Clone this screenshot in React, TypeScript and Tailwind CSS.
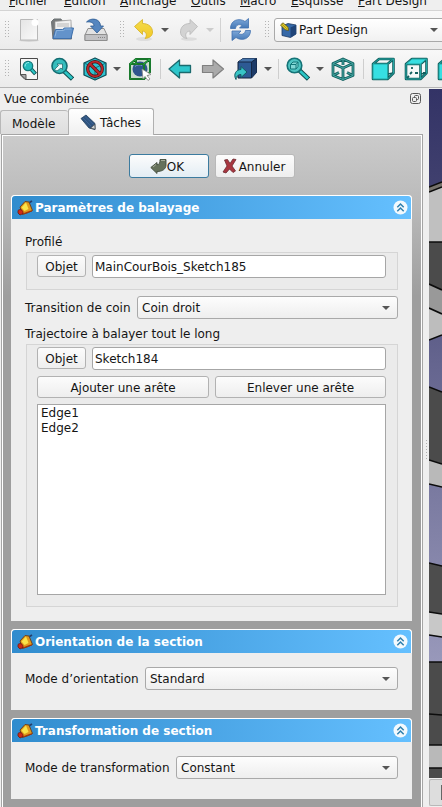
import React from 'react';

const teal = '#2cc5c5';
const ink = '#0d4a4c';
const edge = '#12605f';

function Handle() {
  return (
    <svg width="5" height="18" viewBox="0 0 5 18" className="shrink-0" fill="#b4b4b4">
      {[0, 3, 6, 9, 12, 15].map((y) => (
        <g key={y}>
          <rect x="0" y={y} width="1" height="1" />
          <rect x="3" y={y} width="1" height="1" />
        </g>
      ))}
    </svg>
  );
}

function Caret({ color = '#555555', className = '' }: { color?: string; className?: string }) {
  return (
    <svg width="8" height="4" viewBox="0 0 8 4" className={`shrink-0 ${className}`}>
      <path d="M0 0h8L4 4z" fill={color} />
    </svg>
  );
}

function Icon({ children, className = '' }: { children: React.ReactNode; className?: string }) {
  return (
    <svg width="24" height="24" viewBox="0 0 24 24" className={`shrink-0 ${className}`} strokeLinejoin="round">
      {children}
    </svg>
  );
}

function Gradients() {
  return (
    <svg width="0" height="0" className="absolute">
      <defs>
        <linearGradient id="paper" x1="0" y1="0" x2="1" y2="1">
          <stop offset="0" stopColor="#e4e4e4" />
          <stop offset="1" stopColor="#fafafa" />
        </linearGradient>
        <linearGradient id="blue" x1="0" y1="0" x2="0" y2="1">
          <stop offset="0" stopColor="#7fa9da" />
          <stop offset="1" stopColor="#4377b5" />
        </linearGradient>
        <linearGradient id="gold" x1="0" y1="0" x2="0" y2="1">
          <stop offset="0" stopColor="#f3dc4c" />
          <stop offset="1" stopColor="#f3c824" />
        </linearGradient>
        <linearGradient id="view" x1="0" y1="89" x2="0" y2="778" gradientUnits="userSpaceOnUse">
          <stop offset="0" stopColor="#333366" />
          <stop offset="0.15" stopColor="#41416f" />
          <stop offset="0.4" stopColor="#65658f" />
          <stop offset="0.65" stopColor="#8282a7" />
          <stop offset="0.83" stopColor="#9898ba" />
        </linearGradient>
      </defs>
    </svg>
  );
}

function CubeFace({ top }: { top?: boolean }) {
  const outline = 'M2 7l6-5h14.500v14l-6 6H2zM2 7h14.500v15M16.500 7l6-5';
  return (
    <Icon>
      <path d={outline} fill="#f4f8f8" stroke={edge} strokeWidth="2.600" />
      <path d="M16.500 17l6-1" stroke={edge} strokeWidth="1.500" />
      <path d={top ? 'M2 7l6-5h14.500l-6 5z' : 'M2 7h14.500v15H2z'} fill="#36dfe2" />
      <path d={outline} fill="none" stroke="#22a5a3" strokeWidth="1" />
      {top && <path d="M8 10v2M8 15l-2 2M5 19l-2 2M11 16h3M19 16h3" fill="none" stroke={edge} strokeWidth="1.800" />}
    </Icon>
  );
}

function FileToolbar() {
  return (
    <div className="flex h-[39px] shrink-0 items-center border-b border-[#b5b5b5] bg-linear-to-b from-[#f8f8f8] to-[#ebebeb] pl-[5px]">
      <Handle />
      <Icon className="ml-[8px]">
        <ellipse cx="11" cy="22.500" rx="10" ry="1.200" fill="#cfcfcf" />
        <path d="M2.500 1.500h17v20.500h-17z" fill="url(#paper)" stroke="#b8b8b8" />
        <circle cx="17" cy="4.500" r="3.500" fill="#fff" />
      </Icon>
      <Icon className="ml-[8px]">
        <path d="M1.500 3.500L4 1h7l1 2h8.500l1 18H3z" fill="#777a7c" stroke="#6d7275" />
        <path d="M5 3.500L21 2v11H5z" fill="#f0f0f0" stroke="#999" strokeWidth=".7" />
        <path d="M7 6h12M7 8h12" stroke="#b8b8b8" />
        <path d="M3 20.500l2.500-9h7l2-1.500h9l-2.500 10.500z" fill="#6393cb" stroke="#3f70ac" />
        <path d="M5 18.500l1.500-6h7l2-1.500h6" fill="none" stroke="#8db4de" />
      </Icon>
      <Icon className="ml-[10px]">
        <path d="M4 10.500h16l3 6.500v5.500H1V17z" fill="#e2e2e2" stroke="#8f8f8f" />
        <path d="M1 16.500h22v6H1z" fill="#c2c2c4" stroke="#8f8f8f" />
        <path d="M14 19.500h7" stroke="#858585" strokeDasharray="1 1" />
        <path d="M2.500 4C7-1 16.500.5 16.500 8h3l-6.500 7L6.500 8h3.500C10 4.500 6.500 3.500 2.500 4z" fill="#5586bf" stroke="#2d5c93" strokeWidth=".8" />
      </Icon>
      <div className="ml-[12px]"><Handle /></div>
      <Icon className="ml-[8px]">
        <ellipse cx="11" cy="21" rx="8" ry="2" fill="#ddd" />
        <path d="M1.500 8.500L9.500 1.500v4C16 5.500 19.500 9.500 19.500 14c0 4-3 6-7.500 6.500 2.500-3 1.500-7-2.500-7.500v3.500z" fill="url(#gold)" stroke="#d8b62f" strokeWidth=".9" />
      </Icon>
      <Caret className="ml-[4px]" />
      <Icon className="ml-[10px]">
        <ellipse cx="10" cy="21" rx="8" ry="1.800" fill="#dcdcdc" />
        <path d="M18.500 8.500L11 1.500v4C4.500 5.500 1.500 9.500 1.500 14c0 4 3 6 6.500 6.500-2.500-3-1.500-7 3-7.500v3.500z" fill="#d3d3d3" stroke="#bbbbbb" strokeWidth=".9" />
      </Icon>
      <Caret color="#cccccc" className="ml-[3px]" />
      <div className="ml-[6px] h-[24px] w-px shrink-0 bg-[#d2d2d2]" />
      <Icon className="ml-[8px]">
        <path d="M1.500 10.500C1.500 2 10-.5 16 3.500l3.500-3v9.500h-9l2.500-2.500C10 5.500 7 7 6.500 10.500z" fill="url(#blue)" stroke="#3f70ae" strokeWidth=".8" />
        <path d="M21.500 12.500c0 8.500-8.500 11-14.500 7l-4 3V13h9l-2.500 2.500c3 2 6.500.5 7-3z" fill="url(#blue)" stroke="#3f70ae" strokeWidth=".8" />
      </Icon>
      <div className="ml-[12px]"><Handle /></div>
      <div className="ml-[4px] flex h-[24px] w-[176px] shrink-0 items-center rounded-[3px] border border-[#a9a9a9] bg-linear-to-b from-white to-[#f1f1f1] pl-[5px]">
        <svg width="17" height="16" viewBox="0 0 17 16" className="shrink-0">
          <path d="M2 4l6-2.500L16 3v9l-5.500 3.500L2 13.500z" fill="#3669a8" stroke="#1c3a63" strokeWidth=".8" />
          <path d="M10.500 5.500L16 3v9l-5.500 3.500z" fill="#1f4478" />
          <path d="M.5 3L3 .8l5 4.500.5 3.200-3.200-.7z" fill="#e6cf26" stroke="#5a5014" strokeWidth=".8" />
          <path d="M1.800 2l5 4.800" stroke="#817515" strokeWidth=".7" />
        </svg>
        <span className="ml-[2px] w-[69px] pt-px whitespace-nowrap">Part Design</span>
        <Caret className="ml-[62px]" />
      </div>
    </div>
  );
}

function ViewToolbar() {
  const box = 'M2 7l6-5h14v13l-6 7H2zM2 7h14v15M16 7l6-5M8 2v5';
  const iso = 'M12 2l10 4.500v12L12 22.500l-10-4v-12zM2 6.500l10 4.500 10-4.500M12 11v11.500M2 18.500l6-3M22 18.500l-6-3M12 2v6';
  return (
    <div className="flex h-[38px] shrink-0 items-center border-b border-[#b5b5b5] bg-linear-to-b from-[#f8f8f8] to-[#ebebeb] pl-[5px]">
      <Handle />
      <Icon className="ml-[8px]">
        <path d="M2.500 1.500h17v21H7l-4.500-4.500z" fill="#f6f6f6" stroke="#4a4a4a" />
        <path d="M2.500 17.500H8v5z" fill="#aaa" stroke="#555" />
        <path d="M13 12l4.500 5" stroke={ink} strokeWidth="4" />
        <path d="M13 12l4 4.500" stroke={teal} strokeWidth="2.200" />
        <circle cx="10" cy="9" r="4.700" fill="#25bcbd" stroke="#147679" strokeWidth="1.300" />
        <path d="M7 9.500c0-3 2-4 4-4" stroke="#a0eeee" fill="none" />
      </Icon>
      <Icon className="ml-[8px]">
        <path d="M13.500 13.500l9 8.500" stroke={ink} strokeWidth="4.600" />
        <path d="M14 14l8 7.500" stroke={teal} strokeWidth="2.800" />
        <circle cx="9.500" cy="9" r="7.500" fill="#35bdbd" stroke="#126b70" strokeWidth="1.600" />
        <path d="M4.500 12.500l4-4L7 7h5.500v5.500L11 11l-4 3z" fill="#effafa" stroke="#185d61" strokeWidth=".7" />
      </Icon>
      <Icon className="ml-[9px]">
        <path d="M12 1l11 5v12l-11 5-11-5V6z" fill="#2fc3d0" stroke="#104d56" strokeWidth="1.300" />
        <path d="M1 6l11 5 11-5M12 11v12" fill="none" stroke="#176d77" />
        <circle cx="12" cy="12" r="7.300" fill="none" stroke="#4a1315" strokeWidth="3.200" />
        <path d="M7 7l10 10" stroke="#4a1315" strokeWidth="3.400" />
        <circle cx="12" cy="12" r="7.300" fill="none" stroke="#bd2a2d" strokeWidth="1.800" />
        <path d="M6.500 6.500l11 11" stroke="#bd2a2d" strokeWidth="2" />
      </Icon>
      <Caret className="ml-[6px]" />
      <Icon className="ml-[7px]">
        <path d="M2 7l6-5h14v13l-6 7H2z" fill="#c9dccf" />
        <circle cx="12" cy="12" r="7.500" fill="#2f558e" />
        <path d="M7 9.500c2-2 5-2 7-1" stroke="#7d9dc9" fill="none" />
        <path d={box} fill="none" stroke="#0a4514" strokeWidth="2" />
        <path d={box} fill="none" stroke="#26a742" strokeWidth="1.100" />
        <path d="M14 12l1 10 2-2.500 3 4 2-1.500-3-3.500 4-1z" fill="#fff" stroke="#888" strokeWidth=".8" />
      </Icon>
      <div className="ml-[8px] h-[20px] w-px shrink-0 bg-[#cecece]" />
      <Icon className="ml-[7px]">
        <path d="M1 12l10.500-9v5.500h11v7h-11V21z" fill="#2ec6cb" stroke="#1a6a6e" strokeWidth="1.300" />
      </Icon>
      <Icon className="ml-[9px]">
        <path d="M22.500 12L12 3v5.500H1.500v7H12V21z" fill="#aaa" stroke="#808080" strokeWidth="1.200" />
      </Icon>
      <Icon className="ml-[9px]">
        <path d="M4 5l5-3.500h13.500v14l-5 5.500H4z" fill="#2d5a94" stroke="#12213b" />
        <path d="M4 5l5-3.500h13.500l-5 3.500z" fill="#4675ab" />
        <path d="M17.500 5l5-3.500v14l-5 5.500z" fill="#1d3b68" />
        <path d="M4 5h13.500v16M17.500 5l5-3.500" fill="none" stroke="#142744" />
        <path d="M2 22.500c-3-5 0-10 5-10V9.500l6 5.500-6 5.500v-3c-3 0-5 2-5 5z" fill="#38c4c6" stroke="#125b62" />
      </Icon>
      <Caret className="ml-[6px]" />
      <div className="ml-[6px] h-[20px] w-px shrink-0 bg-[#cecece]" />
      <Icon className="ml-[7px]">
        <path d="M13 13l9.500 9" stroke={ink} strokeWidth="4.600" />
        <path d="M14 14l8 7.500" stroke={teal} strokeWidth="2.800" />
        <circle cx="8.500" cy="8.500" r="7.300" fill="#4fc4c2" stroke="#157377" strokeWidth="1.600" />
        <path d="M4.500 7.500l2.500-2.500h5v4.500l-2 2.500H4.500zM4.500 7.500h5.500V12M10 7.500L12 5" fill="#82d7d5" stroke="#137779" />
      </Icon>
      <Caret className="ml-[6px]" />
      <Icon className="ml-[7px]">
        <path d={iso} fill="none" stroke={edge} strokeWidth="2.800" />
        <path d={iso} fill="none" stroke="#48aaa6" strokeWidth="1" />
      </Icon>
      <div className="ml-[8px] h-[20px] w-px shrink-0 bg-[#cecece]" />
      <span className="ml-[7px] flex shrink-0"><CubeFace /></span>
      <span className="ml-[9px] flex shrink-0"><CubeFace top /></span>
      <span className="ml-[9px] flex w-[6px] shrink-0 overflow-hidden"><CubeFace /></span>
    </div>
  );
}

function SweepIcon() {
  return (
    <svg width="17" height="16" viewBox="0 0 17 16" className="shrink-0">
      <path d="M3 7l5-5.500 4 .5 3.500 8.500-4 2-6 2z" fill="#e09a1c" stroke="#6b3a12" strokeWidth=".9" />
      <path d="M4.500 7.500L9 2.500l2.500 6.500-4 2z" fill="#f9e34a" />
      <path d="M1 10.500c2-2 5.500-.5 5 3l-3 1.500-2-2z" fill="#cf2b17" stroke="#6d1610" strokeWidth=".8" />
      <path d="M6 13.500c3 0 6-2.500 9-2.500" fill="none" stroke="#a5300f" strokeWidth="1.200" />
      <path d="M12.500 2.500L15 1" stroke="#273e6a" strokeWidth="1.800" />
    </svg>
  );
}

function Section({ title, height, children }: { title: string; height: string; children: React.ReactNode }) {
  return (
    <section className={`flex flex-col rounded-t-[4px] bg-[#eeeeee] ${height}`}>
      <header className="flex h-[24px] shrink-0 items-center rounded-t-[4px] border border-b-0 border-white bg-linear-to-r from-[#308cce] to-[#65c0ff] pr-[2px] pl-[5px] font-bold text-white">
        <SweepIcon />
        <span className="ml-px grow pt-px whitespace-nowrap">{title}</span>
        <svg width="15" height="15" viewBox="0 0 15 15" className="mr-px">
          <circle cx="7.500" cy="7.500" r="7" fill="#f3f9fd" />
          <path d="M4.300 7.200l3.200-3.200 3.200 3.200M4.300 11.200L7.500 8l3.200 3.200" fill="none" stroke="#2f7fad" strokeWidth="1.500" />
        </svg>
      </header>
      {children}
    </section>
  );
}

function Btn({ children, className = '' }: { children: React.ReactNode; className?: string }) {
  return (
    <button className={`flex shrink-0 items-center justify-center rounded-[3px] border bg-linear-to-b from-[#fcfcfc] whitespace-nowrap ${className}`}>
      {children}
    </button>
  );
}

function Select({ value }: { value: string }) {
  return (
    <div className="flex h-[23px] grow items-center justify-between rounded-[3px] border border-[#a9a9a9] bg-linear-to-b from-[#fdfdfd] to-[#eeeeee] pr-[7px] pl-[4px]">
      <span className="pt-[2px]">{value}</span>
      <Caret />
    </div>
  );
}

function ObjectRow({ value }: { value: string }) {
  return (
    <div className="flex items-start gap-[6px]">
      <Btn className="h-[22px] w-[49px] border-[#b2b2b2] to-[#eeeeee] pt-[2px]">Objet</Btn>
      <div className="flex h-[23px] grow items-center rounded-[3px] border border-[#a6a6a6] bg-white pt-[2px] pl-[2px]">{value}</div>
    </div>
  );
}

function ModelView() {
  const bands: [string, string][] = [
    ['0,187 13,182 13,188 0,192', '#77736c'],
    ['0,192 13,187 13,242 0,242', '#c0c0c0'],
    ['0,242 13,242 13,290 0,284', '#4b4b4b'],
    ['0,284 13,290 13,314 0,308', '#999999'],
    ['0,308 13,314 13,335 0,340', '#bdbdbd'],
    ['0,387 13,392 13,464 0,460', '#4b4b4b'],
    ['0,460 13,464 13,487 0,484', '#b9b9b9'],
    ['0,563 13,566 13,614 0,612', '#4d4d4d'],
    ['0,612 13,614 13,637 0,635', '#c8c8c8'],
    ['0,662 13,662 13,745 0,745', '#4b4b4b'],
    ['0,745 13,745 13,768 0,768', '#b9b9b9'],
    ['0,768 13,768 13,778 0,778', '#4b4b4b'],
  ];
  return (
    <svg width="13" height="689" viewBox="0 89 13 689" className="shrink-0">
      <path d="M0 89h13v689H0z" fill="url(#view)" />
      {bands.map(([points, fill]) => (
        <polygon key={points} points={points} fill={fill} />
      ))}
      <path
        d="M0 187l13-5M0 192l13-5M0 242h13M0 284l13 6M0 308l13 6M0 340l13-5M0 387l13 5M0 460l13 4M0 484l13 3M0 563l13 3M0 612l13 2M0 635l13 2M0 662h13M0 714l13 1M0 745h13M0 768h13"
        stroke="#0c0c0c"
        strokeWidth="1.600"
        fill="none"
      />
    </svg>
  );
}

export default function App() {
  return (
    <div className="flex h-[807px] w-[442px] flex-col overflow-hidden bg-[#efefef] font-['DejaVu_Sans',sans-serif] text-[12px] leading-[15px] text-[#151515]">
      <Gradients />
      <nav className="flex h-[11px] shrink-0 items-end overflow-hidden border-b border-[#d4d4d4] pb-px pl-[9px] whitespace-nowrap">
        <span className="w-[55px] shrink-0"><u>F</u>ichier</span>
        <span className="w-[56px] shrink-0"><u>É</u>dition</span>
        <span className="w-[71px] shrink-0"><u>A</u>ffichage</span>
        <span className="w-[49px] shrink-0"><u>O</u>utils</span>
        <span className="w-[51px] shrink-0"><u>M</u>acro</span>
        <span className="w-[67px] shrink-0"><u>E</u>squisse</span>
        <span className="shrink-0"><u>P</u>art Design</span>
      </nav>
      <FileToolbar />
      <ViewToolbar />
      <div className="flex h-[719px] shrink-0">
        <aside className="flex w-[423px] flex-col">
          <div className="flex h-[20px] shrink-0 items-end justify-between pr-[2px] pl-[4px]">
            <span className="pb-px">Vue combinée</span>
            <svg width="11" height="11" viewBox="0 0 11 11" className="mb-[4px]" fill="none" stroke="#575757">
              <rect x=".5" y=".5" width="10" height="10" rx="2" />
              <rect x="4.500" y="2.500" width="4" height="4" rx="1" />
              <rect x="2.500" y="4.500" width="4" height="4" rx="1" fill="#efefef" />
            </svg>
          </div>
          <div className="flex h-[26px] shrink-0 items-end">
            <div className="flex h-[24px] w-[68px] items-center rounded-t-[3px] border border-r-0 border-b-0 border-[#b8b8b8] bg-linear-to-b from-[#e9e9e9] to-[#dedede] pt-[4px] pl-[11px]">Modèle</div>
            <div className="z-10 -mb-px flex h-[27px] w-[86px] items-center rounded-t-[3px] border border-b-0 border-[#b0b0b0] bg-linear-to-b from-white to-[#f0f0f0] pl-[11px]">
              <svg width="16" height="17" viewBox="0 0 16 17">
                <path d="M1 4.500L6 1l9 8.500v6l-6-1.500z" fill="#2f5480" stroke="#22405f" strokeWidth=".8" />
                <path d="M10.500 14.200l4.200-4 .5 5z" fill="#ced2d4" stroke="#3c4245" strokeWidth=".7" />
                <path d="M3 4l8 8M5 2.500l8.500 8" stroke="#44699a" strokeWidth=".8" />
              </svg>
              <span className="ml-[4px] pt-[2px]">Tâches</span>
            </div>
          </div>
          <div className="ml-px flex grow flex-col border-x border-t border-[#a5a5a5]">
            <div className="flex grow flex-col border-x border-t border-white bg-[linear-gradient(to_bottom,#cbcbcb_0px,#b8b8b8_75px,#9e9e9e_160px,#9e9e9e_100%)] pr-[9px] pl-[8px]">
              <div className="mt-[18px] flex h-[24px] shrink-0 gap-[6px] pl-[118px]">
                <Btn className="w-[80px] border-[#3c7b9f] to-[#e3edf4] pr-[4px]">
                  <svg width="17" height="16" viewBox="0 0 17 16">
                    <path d="M.8 9.500L7 4.500v2.200c2.500 0 3-2 3-5.200h6V7c0 4-3.500 6.500-9 6.500v2z" fill="#65715b" stroke="#434d3d" strokeWidth=".9" />
                    <path d="M3 9l3-2.500M11 2.500h4" stroke="#a4aa98" />
                  </svg>
                  <span className="pt-[2px]">OK</span>
                </Btn>
                <Btn className="w-[80px] gap-[2px] border-[#b9b9b9] to-[#eeeeee] pr-[3px]">
                  <svg width="15" height="16" viewBox="0 0 15 16">
                    <path d="M2.500 2l3-.5L8 5.500l3-4.500 3 .5-4 6.500 3.500 5-2.500 1.500L7.500 11 4 15l-3-1 4-6z" fill="#a93640" stroke="#6b2a30" strokeWidth=".8" />
                  </svg>
                  <span className="pt-[2px]">Annuler</span>
                </Btn>
              </div>
              <div className="mt-[17px] flex shrink-0 flex-col gap-[8px]">
                <Section title="Paramètres de balayage" height="h-[426px]">
                  <div className="flex flex-col px-[14px]">
                    <div className="mt-[16px] h-[15px]">Profilé</div>
                    <div className="mt-[2px] ml-px h-[38px] border border-[#d5d5d5] bg-[#ebebeb] pt-[2px] pr-[11px] pl-[10px]">
                      <ObjectRow value="MainCourBois_Sketch185" />
                    </div>
                    <div className="mt-[6px] flex items-center gap-[6px]">
                      <span className="w-[106px] shrink-0 pt-[2px] whitespace-nowrap">Transition de coin</span>
                      <Select value="Coin droit" />
                    </div>
                    <div className="mt-[8px] h-[15px]">Trajectoire à balayer tout le long</div>
                    <div className="mt-[2px] ml-px flex h-[263px] flex-col border border-[#d5d5d5] bg-[#ebebeb] pt-[2px] pr-[11px] pl-[10px]">
                      <ObjectRow value="Sketch184" />
                      <div className="mt-[6px] flex gap-[6px]">
                        <Btn className="h-[22px] w-[172px] border-[#b2b2b2] to-[#eeeeee] pt-[2px]">Ajouter une arête</Btn>
                        <Btn className="h-[22px] w-[171px] border-[#b2b2b2] to-[#eeeeee] pt-[2px]">Enlever une arête</Btn>
                      </div>
                      <ul className="mt-[6px] h-[191px] border border-[#a6a6a6] bg-white pt-px pl-[3px]">
                        <li>Edge1</li>
                        <li>Edge2</li>
                      </ul>
                    </div>
                  </div>
                </Section>
                <Section title="Orientation de la section" height="h-[81px]">
                  <div className="mt-[14px] flex items-center gap-[6px] px-[14px]">
                    <span className="w-[114px] shrink-0 pt-[2px] whitespace-nowrap">Mode d’orientation</span>
                    <Select value="Standard" />
                  </div>
                </Section>
                <Section title="Transformation de section" height="h-[81px]">
                  <div className="mt-[14px] flex items-center gap-[6px] px-[14px]">
                    <span className="w-[145px] shrink-0 pt-[2px] whitespace-nowrap">Mode de transformation</span>
                    <Select value="Constant" />
                  </div>
                </Section>
              </div>
            </div>
          </div>
        </aside>
        <div className="flex w-[6px] justify-center pt-[352px]">
          <svg width="3" height="22" viewBox="0 0 3 22" fill="#b0b0b0">
            {[0, 3, 6, 9, 12, 15, 18].map((y) => (
              <rect key={y} x="1" y={y} width="1" height="1" />
            ))}
          </svg>
        </div>
        <div className="flex w-[13px] flex-col pt-px">
          <ModelView />
          <div className="mt-px flex h-[27px] justify-end rounded-l-[2px] border border-r-0 border-[#b8b8b8] bg-[#dddddd] pt-[5px]">
            <div className="h-[15px] w-px bg-[#666666]" />
          </div>
        </div>
      </div>
    </div>
  );
}
